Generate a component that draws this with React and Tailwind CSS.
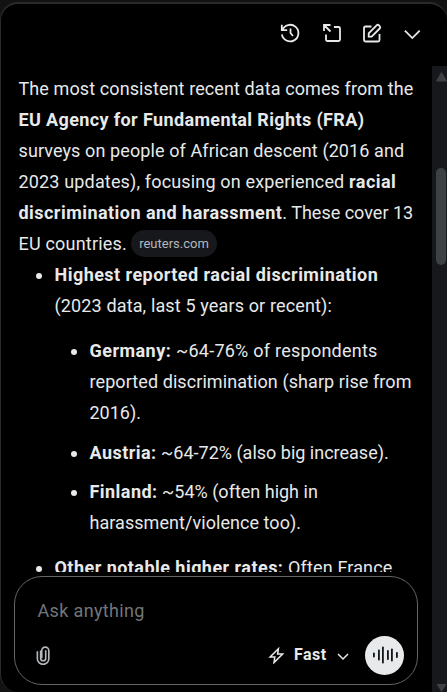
import { clsx } from 'clsx';

const BARS = [
  { x: 1, h: 5 },
  { x: 6, h: 11 },
  { x: 10, h: 17 },
  { x: 15, h: 10 },
  { x: 19, h: 13 },
  { x: 24, h: 6 },
];

function Line({ className, children }) {
  return <span className={clsx('block h-[31px] whitespace-nowrap', className)}>{children}</span>;
}

function Bold({ children }) {
  return <b className="font-bold tracking-[0.46px]">{children}</b>;
}

function Bullet({ className, children }) {
  return (
    <li className={clsx('flex', className)}>
      <span className="mt-[14px] -ml-[18.5px] mr-[12.5px] h-1.5 w-1.5 shrink-0 rounded-full bg-[#e7e9ea]" />
      <div>{children}</div>
    </li>
  );
}

function HeaderIcons() {
  return (
    <div className="flex h-[63px] shrink-0 items-start pl-[278px] pt-[18px] text-[#e7e9ea]">
      <svg className="h-[22px] w-[22px]" viewBox="0 0 22 22" fill="none" stroke="currentColor" strokeWidth="1.8">
        <path d="M2.8 2.8v5.4h5.4M3.4 8a8.3 8.3 0 1 1-.5 4.4M11.5 6.5V11l2.5 3" />
      </svg>
      <svg className="ml-5 h-[22px] w-[22px]" viewBox="0 0 22 22" fill="none" stroke="currentColor" strokeWidth="1.8">
        <path d="M3 9V3h6.500M3 3l6.5 6.5M13 5h4.500a1.500 1.500 0 0 1 1.500 1.500v11a1.500 1.500 0 0 1-1.500 1.500h-11A1.500 1.500 0 0 1 5 17.500v-5" />
      </svg>
      <svg className="ml-[18px] h-[22px] w-[22px]" viewBox="0 0 22 22" fill="none" stroke="currentColor" strokeWidth="1.8">
        <path d="M10.500 4.500h-6A1.500 1.500 0 0 0 3 6v12a1.500 1.500 0 0 0 1.500 1.500H17a1.500 1.500 0 0 0 1.500-1.500v-6" />
        <path d="M7.700 14.600v-3.300l7.900-7.900a1.700 1.700 0 0 1 2.400 0l.7.7a1.700 1.700 0 0 1 0 2.400l-8 8.100z" />
      </svg>
      <svg className="ml-[18px] h-[22px] w-[22px]" viewBox="0 0 22 22" fill="none" stroke="currentColor" strokeWidth="1.8">
        <path d="M3.900 8.700l7.400 7.400 7.400-7.400" />
      </svg>
    </div>
  );
}

function Answer() {
  return (
    <div className="h-[505px] shrink-0 overflow-hidden pl-[17.5px] pt-[6px] text-[18px] leading-[31px]">
      <p>
        <Line className="tracking-[0.1px]">The most consistent recent data comes from the</Line>
        <Line><b className="tracking-[0.37px]">EU Agency for Fundamental Rights (FRA)</b></Line>
        <Line className="tracking-[0.1px]">surveys on people of African descent (2016 and</Line>
        <Line className="tracking-[0.16px]">2023 updates), focusing on experienced <Bold>racial</Bold></Line>
        <Line><Bold>discrimination and harassment</Bold>. These cover 13</Line>
        <span className="flex h-[31px] items-center">
          <span className="tracking-[0.2px]">EU countries.</span>
          <a className="ml-[4px] flex h-[27px] w-[86px] items-center justify-center rounded-full bg-[#16181c] text-[13px] text-[#b4b8bc]">reuters.com</a>
        </span>
      </p>
      <ul className="pl-[36px]">
        <Bullet>
          <Line><Bold>Highest reported racial discrimination</Bold></Line>
          <Line className="tracking-[0.14px]">(2023 data, last 5 years or recent):</Line>
          <ul className="flex flex-col gap-2 pl-[35px] pt-[14px]">
            <Bullet>
              <Line className="tracking-[0.25px]"><Bold>Germany:</Bold> ~64-76% of respondents</Line>
              <Line className="tracking-[0.08px]">reported discrimination (sharp rise from</Line>
              <Line>2016).</Line>
            </Bullet>
            <Bullet className="pt-px">
              <Line><Bold>Austria:</Bold> ~64-72% (also big increase).</Line>
            </Bullet>
            <Bullet>
              <Line><Bold>Finland:</Bold> ~54% (often high in</Line>
              <Line className="tracking-[0.05px]">harassment/violence too).</Line>
            </Bullet>
          </ul>
        </Bullet>
        <Bullet className="pt-[14px]">
          <Line className="tracking-[0.15px]"><Bold>Other notable higher rates:</Bold> Often France</Line>
        </Bullet>
      </ul>
    </div>
  );
}

function Composer() {
  return (
    <div className="ml-[13px] mt-1 flex h-[109px] w-[404px] shrink-0 flex-col rounded-[28px] border border-[#60666a] pl-[22px]">
      <div className="pt-[21px] pl-[0.5px] text-[18px] leading-[26px] tracking-[0.35px] text-[#71767b]">Ask anything</div>
      <div className="mt-[11px] flex h-[40px] items-center text-[#e7e9ea]">
        <svg className="-ml-[2px] h-[20px] w-[16px] text-[#b4b8bc]" viewBox="0 0 16 22" fill="none" stroke="currentColor" strokeWidth="1.8">
          <path d="M11 5.800v8.700a2.800 2.800 0 0 1-5.600 0V6M1.800 7v8a6.300 6.300 0 0 0 12.600 0V6.200a3.900 3.900 0 0 0-7.800 0v8.400" />
        </svg>
        <svg className="ml-[217px] h-[17px] w-[17px]" viewBox="0 0 18 18" fill="none" stroke="currentColor" strokeWidth="1.6">
          <path d="M11 1.800 2.200 10.500h5l-.8 6L15.500 7.500h-5.300z" />
        </svg>
        <span className="ml-[9px] w-[34px] whitespace-nowrap text-[16px] font-bold tracking-[0.5px]">Fast</span>
        <svg className="ml-[8px] mt-1 h-[12px] w-[14px]" viewBox="0 0 14 12" fill="none" stroke="currentColor" strokeWidth="1.5">
          <path d="M2 3l5 5 5-5" />
        </svg>
        <button className="ml-[15px] flex h-[39px] w-[39px] items-center justify-center rounded-full bg-[#e7e9ea]">
          <svg width="26" height="20" viewBox="0 0 26 20" fill="#0f1419">
            {BARS.map((bar) => (
              <rect key={bar.x} x={bar.x} y={10 - bar.h / 2} width="1.8" height={bar.h} rx=".8" />
            ))}
          </svg>
        </button>
      </div>
    </div>
  );
}

export default function App() {
  return (
    <div className="h-[692px] w-[447px] overflow-hidden bg-[#121212] pt-[2px] font-['Roboto',sans-serif] text-[#e7e9ea]">
      <div className="flex h-[690px] rounded-[18px] border-l border-t-2 border-[#2a2a2a] bg-black">
        <div className="flex w-[431px] shrink-0 flex-col">
          <HeaderIcons />
          <Answer />
          <Composer />
        </div>
        <div className="mt-[62px] flex w-[15px] shrink-0 flex-col items-center bg-[#16181c]">
          <svg className="mt-[6px] ml-1 h-[10px] w-[11px]" viewBox="0 0 11 10" fill="#3e4144">
            <path d="M5.5 0.5 10.5 9H.5z" stroke="#3e4144" />
          </svg>
          <div className="mt-[86px] ml-[3px] h-[97px] w-[10px] rounded-full bg-[#3e4144]" />
          <svg className="mt-auto ml-1 h-[8px] w-[11px]" viewBox="0 0 11 8" fill="#3e4144">
            <path d="M.5 0h10l-5 8z" />
          </svg>
        </div>
      </div>
    </div>
  );
}
